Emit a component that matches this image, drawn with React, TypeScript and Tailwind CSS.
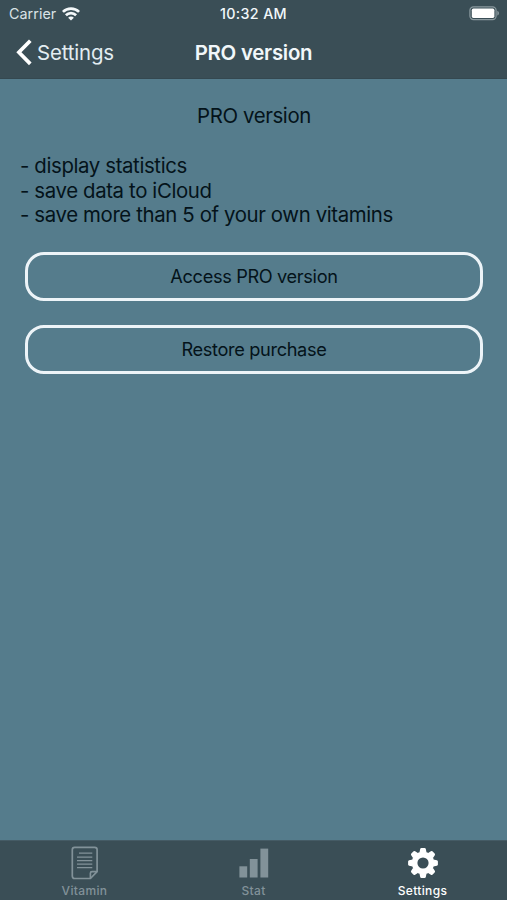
import type { ReactNode } from 'react';

const features = [
  'display statistics',
  'save data to iCloud',
  'save more than 5 of your own vitamins',
];

const WifiIcon = () => (
  <svg width="18" height="14" viewBox="0 0 18 14" fill="none" stroke="#f4f8fa" strokeWidth="2.7">
    <path d="M0.9 4.9C5.4 0.4 12.6 0.4 17.1 4.9" />
    <path d="M3.9 8.3C6.8 5.4 11.2 5.4 14.1 8.3" />
    <path d="M9 13.6L6.1 10.7C7.7 9.1 10.3 9.1 11.9 10.7Z" fill="#f4f8fa" stroke="none" />
  </svg>
);

const BatteryIcon = () => (
  <svg width="31" height="15" viewBox="0 0 31 15" fill="none">
    <rect x="0.9" y="0.8" width="26.2" height="12.8" rx="3.6" stroke="#8a999f" strokeWidth="1.2" />
    <rect x="2.8" y="2.6" width="22.6" height="9.3" rx="1.6" fill="#fff" />
    <path d="M28.3 4.8C30.5 5.6 30.5 8.8 28.3 9.6Z" fill="#8a999f" />
  </svg>
);

const BackIcon = () => (
  <svg width="16" height="27" viewBox="0 0 16 27" fill="none" stroke="#fff" strokeWidth="3.7">
    <path d="M14.3 1.7L2.9 13.3L14.3 24.9" />
  </svg>
);

const VitaminIcon = () => (
  <svg width="28" height="34" viewBox="0 0 28 34" fill="none" stroke="currentColor" strokeWidth="1.7">
    <path d="M3.6 1.3H23.7Q26.1 1.3 26.1 3.7V25.6L19.4 32.5H3.6Q1.3 32.5 1.3 30.1V3.7Q1.3 1.3 3.6 1.3Z" />
    <path d="M19.4 32.5V27.2Q19.4 25.6 21 25.6H26.1" />
    <path d="M8 7.1H21.3M6 11.1H21.3M6 14.6H21.3M6 18.1H21.3M6 21.6H21.3" strokeWidth="1.4" />
  </svg>
);

const StatIcon = () => (
  <svg width="30" height="30" viewBox="0 0 30 30" fill="currentColor">
    <rect x="0.4" y="18.3" width="7.8" height="11.2" />
    <rect x="10.8" y="11" width="7.8" height="18.5" />
    <rect x="21.4" y="0.6" width="7.8" height="28.9" />
  </svg>
);

const teeth = [0, 45, 90, 135, 180, 225, 270, 315];

const GearIcon = () => (
  <svg width="30" height="30" viewBox="-15 -15 30 30" fill="currentColor">
    <circle r="8.4" fill="none" stroke="currentColor" strokeWidth="5.6" />
    {teeth.map(angle => (
      <path key={angle} transform={`rotate(${angle})`} d="M-3.6 -10.3L-2.8 -13.9Q-2.6 -14.9 -1.6 -14.9H1.6Q2.6 -14.9 2.8 -13.9L3.6 -10.3Z" />
    ))}
  </svg>
);

const PillButton = ({ children }: { children: ReactNode }) => (
  <button className="h-[49px] w-full rounded-[19px] border-3 border-[#edf4f8] text-[18.2px] tracking-[-0.35px]">
    {children}
  </button>
);

const tabs = [
  { label: 'Vitamin', icon: <VitaminIcon />, active: false },
  { label: 'Stat', icon: <StatIcon />, active: false },
  { label: 'Settings', icon: <GearIcon />, active: true },
];

const App = () => (
  <div className="flex h-[900px] w-[507px] flex-col overflow-hidden bg-[#557c8c] font-['Inter','Liberation_Sans',sans-serif] text-[#04131a]">
    <header className="h-[79px] shrink-0 border-b border-[#344850] bg-[#3a4e56] text-[#f1f7fa]">
      <div className="grid h-[27px] grid-cols-3 items-center px-[7px] text-[14.3px]">
        <div className="flex items-center gap-1.5 pl-0.5 text-[#d9e2e6]">
          <span className="tracking-[0.05px]">Carrier</span>
          <WifiIcon />
        </div>
        <span className="text-center font-medium tracking-[0.35px]">10:32 AM</span>
        <div className="flex justify-end">
          <BatteryIcon />
        </div>
      </div>
      <div className="grid h-[51px] grid-cols-3 items-center px-4 text-[20.4px]">
        <button className="flex items-center gap-[5px] text-[#e3edf2]">
          <BackIcon />
          <span className="pt-0.5 tracking-[-0.15px]">Settings</span>
        </button>
        <h1 className="pt-0.5 text-center font-semibold tracking-[-0.25px] whitespace-nowrap">PRO version</h1>
      </div>
    </header>

    <main className="flex-1 pt-[25px] pr-[19px] pl-5 text-[20.4px] leading-[24.8px]">
      <h2 className="text-center tracking-[-0.38px]">PRO version</h2>
      <ul className="pt-[25px] tracking-[-0.38px]">
        {features.map(feature => (
          <li key={feature}>- {feature}</li>
        ))}
      </ul>
      <div className="flex flex-col gap-6 px-[5px] pt-[24px]">
        <PillButton>Access PRO version</PillButton>
        <PillButton>Restore purchase</PillButton>
      </div>
    </main>

    <nav className="grid h-[60px] shrink-0 grid-cols-3 border-t border-[#455b65] bg-[#3a4e56]">
      {tabs.map(({ label, icon, active }) => (
        <button key={label} className={`flex flex-col items-center pt-1 ${active ? 'text-white' : 'text-[#829299]'}`}>
          <span className="flex h-9 items-center pl-px">{icon}</span>
          <span className="text-[12px] leading-[19px] font-medium tracking-[0.35px]">{label}</span>
        </button>
      ))}
    </nav>
  </div>
);

export default App;
